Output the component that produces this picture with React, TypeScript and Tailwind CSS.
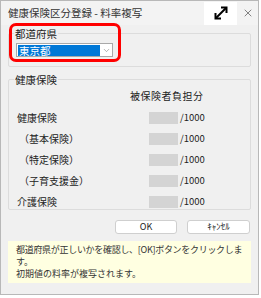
import { ChevronDown, X } from "lucide-react";

const rows = [
  { label: "健康保険", indent: false },
  { label: "（基本保険）", indent: true },
  { label: "（特定保険）", indent: true },
  { label: "（子育支援金）", indent: true },
  { label: "介護保険", indent: false },
];

function ExpandIcon() {
  return (
    <svg width="16" height="16" viewBox="0 0 16 16" fill="none">
      <path d="M3 13 L13 3" stroke="#000" strokeWidth="2" />
      <path d="M8 2.5 H13.5 V8" stroke="#000" strokeWidth="2" fill="none" />
      <path d="M2.5 8 V13.5 H8" stroke="#000" strokeWidth="2" fill="none" />
    </svg>
  );
}

export default function App() {
  return (
    <div
      className="w-[261px] h-[298px] bg-white text-[10px] text-[#222]"
      style={{ fontFamily: '"Noto Sans CJK JP", "Noto Sans", sans-serif' }}
    >
      <div className="w-[259px] h-[295px] border border-[#b8b8b8] bg-[#f0f0f0] flex flex-col">
        {/* title bar */}
        <div className="h-[24px] flex items-center bg-[#f3f3f3]">
          <div className="pl-[7px] flex-1 text-[10.5px] text-[#333]">健康保険区分登録 - 料率複写</div>
          <div className="w-[33px] h-[23px] bg-white flex items-center justify-center">
            <ExpandIcon />
          </div>
          <div className="w-[21px] flex items-center justify-center text-[#444]">
            <X size={12} strokeWidth={1.3} />
          </div>
        </div>

        <div className="px-[7px] flex flex-col">
          {/* prefecture group */}
          <div className="relative">
            <fieldset className="border border-[#dcdcdc] rounded-[2px] h-[40px] mt-[2px] px-[7px]">
              <legend className="px-[1px] text-[10.5px] leading-[13px] ml-[-2px]">都道府県</legend>
              <div className="w-[97px] h-[14px] mt-[3px] bg-white border border-[#a9a9a9] flex items-center pl-[1px]">
                <div className="w-[82px] h-[11px] bg-[#0078d7] text-white text-[10.5px] leading-[11px] pl-[1px]">東京都</div>
                <div className="flex-1 flex justify-center text-[#777]">
                  <ChevronDown size={9} strokeWidth={1.5} />
                </div>
              </div>
            </fieldset>
            <div className="absolute left-[1px] top-[-2px] w-[112px] h-[39px] border-[3px] border-[#ff0000] rounded-[7px]" />
          </div>

          {/* health insurance group */}
          <fieldset className="border border-[#dcdcdc] rounded-[2px] mt-[6px] h-[137px] pl-[8px] pr-[7px]">
            <legend className="px-[1px] text-[10.5px] leading-[13px] ml-[-3px]">健康保険</legend>
            <div className="pl-[113px] mt-[3px] leading-[13px] tracking-[0.5px]">被保険者負担分</div>
            <div className="flex flex-col mt-[5px]">
              {rows.map((r) => (
                <div key={r.label} className="h-[21px] flex items-center">
                  <div className={`w-[132px] ${r.indent ? "pl-[2px]" : ""}`}>{r.label}</div>
                  <div className="w-[29px] h-[12px] bg-[#d4d4d4]" />
                  <div className="pl-[2px] text-[9.5px]">/1000</div>
                </div>
              ))}
            </div>
          </fieldset>

          {/* buttons */}
          <div className="flex justify-end gap-[10px] mt-[10px] pr-[1px]">
            <button className="w-[62px] h-[14px] bg-white border border-[#cfcfcf] rounded-[3px] text-[9px] leading-[12px]">OK</button>
            <button className="w-[63px] h-[14px] bg-white border border-[#cfcfcf] rounded-[3px] text-[9px] leading-[12px]">ｷｬﾝｾﾙ</button>
          </div>

          {/* info */}
          <div className="mt-[7px] h-[42px] bg-[#ffffe1] pl-[8px] pt-[3px] text-[9px] leading-[12px] text-[#333] whitespace-nowrap">
            <div className="tracking-[-0.3px]">都道府県が正しいかを確認し、[OK]ボタンをクリックしま</div>
            <div>す。</div>
            <div>初期値の料率が複写されます。</div>
          </div>
        </div>
      </div>
    </div>
  );
}
